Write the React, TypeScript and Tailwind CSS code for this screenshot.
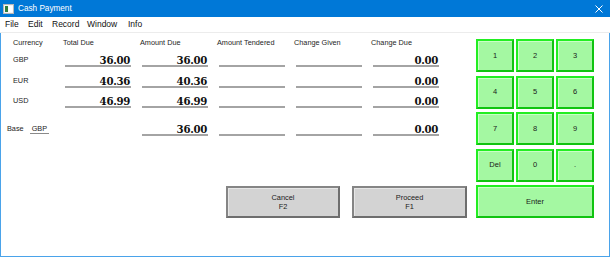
import React from "react";

const cols = ["Total Due", "Amount Due", "Amount Tendered", "Change Given", "Change Due"];

type Cell = string | null | undefined; // null => no field, "" => empty field

function Field({ v }: { v: Cell }) {
  if (v === null) return <div className="w-[66px] ml-[11px]" />;
  return (
    <div className="w-[66px] ml-[11px] h-[18px] flex items-end justify-end border-b-2 border-[#a4a4a4]">
      <span className="font-['DejaVu_Serif',serif] font-bold text-[10.2px] leading-[10px] tracking-[-0.3px] pr-[1px] text-[#111]">
        {v}
      </span>
    </div>
  );
}

function Row({ label, vals, mt }: { label: React.ReactNode; vals: Cell[]; mt: string }) {
  return (
    <div className={`flex items-end h-[18px] ${mt}`}>
      {label}
      {vals.map((v, i) => (
        <Field key={i} v={v} />
      ))}
    </div>
  );
}

function Label({ t }: { t: string }) {
  return <div className="w-[41px] self-stretch flex items-center pt-[4px]">{t}</div>;
}

function GreenBtn({ t, wide }: { t: string; wide?: boolean }) {
  return (
    <div
      className={`${wide ? "col-span-3" : ""} h-[33px] flex items-center justify-center bg-[#a4f8a2] border-2 border-t-[#22ee22] border-l-[#22ee22] border-r-[#10c410] border-b-[#10c410] shadow-[inset_1px_1px_0_#c9ffc6] text-[7.5px] text-[#1a1a1a]`}
    >
      {t}
    </div>
  );
}

function GrayBtn({ a, b, w }: { a: string; b: string; w: string }) {
  return (
    <div
      className={`${w} h-[32px] flex flex-col items-center justify-center bg-[#d3d3d3] border-2 border-t-[#858585] border-l-[#858585] border-r-[#6e6e6e] border-b-[#6e6e6e] shadow-[inset_1px_1px_0_#e6e6e6] text-[7.4px] leading-[9.5px] text-[#1a1a1a]`}
    >
      <span>{a}</span>
      <span>{b}</span>
    </div>
  );
}

export default function App() {
  return (
    <div className="w-[610px] h-[257px] flex flex-col bg-white font-['Liberation_Sans',Arial,sans-serif] text-[#1e1e1e] overflow-hidden">
      {/* Title bar */}
      <div className="h-[17px] bg-[#0078d7] flex items-center pt-[1px] text-white shrink-0">
        <svg className="ml-[3px]" width="11" height="10" viewBox="0 0 11 10">
          <rect x="0.5" y="0.5" width="10" height="9" fill="#f4f4f4" stroke="#b8b8b8" />
          <rect x="2" y="2" width="3" height="6" fill="#2f7d3a" />
          <rect x="5.5" y="2" width="4" height="6" fill="#ffffff" />
        </svg>
        <span className="ml-[4px] text-[8.2px]">Cash Payment</span>
        <svg className="ml-auto mr-[7px]" width="8" height="8" viewBox="0 0 8 8">
          <path d="M0.5 0.5 L7.5 7.5 M7.5 0.5 L0.5 7.5" stroke="#ffffff" strokeWidth="1" />
        </svg>
      </div>
      {/* Menu bar */}
      <div className="h-[16px] flex items-center pl-[5px] text-[8.5px] text-[#111] border-b border-[#ececec] shrink-0">
        <span className="w-[23px]">File</span>
        <span className="w-[24px]">Edit</span>
        <span className="w-[35px]">Record</span>
        <span className="w-[41px]">Window</span>
        <span>Info</span>
      </div>
      {/* Body */}
      <div className="flex-1 flex border-x border-b border-[#4aa3ea] text-[7.3px]">
        <div className="w-[475px] flex flex-col pl-[12px] pt-[4px] pb-[38px]">
          <div className="flex items-center h-[12px] text-[#1e1e1e]">
            <div className="w-[50px]">Currency</div>
            {cols.map((c) => (
              <div key={c} className="w-[77px]">
                {c}
              </div>
            ))}
          </div>
          <Row label={<Label t="GBP" />} vals={["36.00", "36.00", "", "", "0.00"]} mt="mt-0" />
          <Row label={<Label t="EUR" />} vals={["40.36", "40.36", "", "", "0.00"]} mt="mt-[3px]" />
          <Row label={<Label t="USD" />} vals={["46.99", "46.99", "", "", "0.00"]} mt="mt-[2px]" />
          <Row
            label={
              <div className="w-[47px] -ml-[6px] self-stretch flex items-center pt-[4px]">
                <span>Base</span>
                <span className="ml-[6px] w-[19px] pl-[2px] leading-[8px] border-b border-[#8a8a8a]">GBP</span>
              </div>
            }
            vals={[null, "36.00", "", "", "0.00"]}
            mt="mt-[10px]"
          />
          <div className="mt-auto flex justify-end gap-[12px] pr-[9px]">
            <GrayBtn a="Cancel" b="F2" w="w-[114px]" />
            <GrayBtn a="Proceed" b="F1" w="w-[115px]" />
          </div>
        </div>
        <div className="w-[118px] pt-[6px]">
          <div className="grid grid-cols-3 gap-x-[2px] gap-y-[3.5px]">
            {["1", "2", "3", "4", "5", "6", "7", "8", "9", "Del", "0", "."].map((k) => (
              <GreenBtn key={k} t={k} />
            ))}
            <GreenBtn t="Enter" wide />
          </div>
        </div>
      </div>
    </div>
  );
}
